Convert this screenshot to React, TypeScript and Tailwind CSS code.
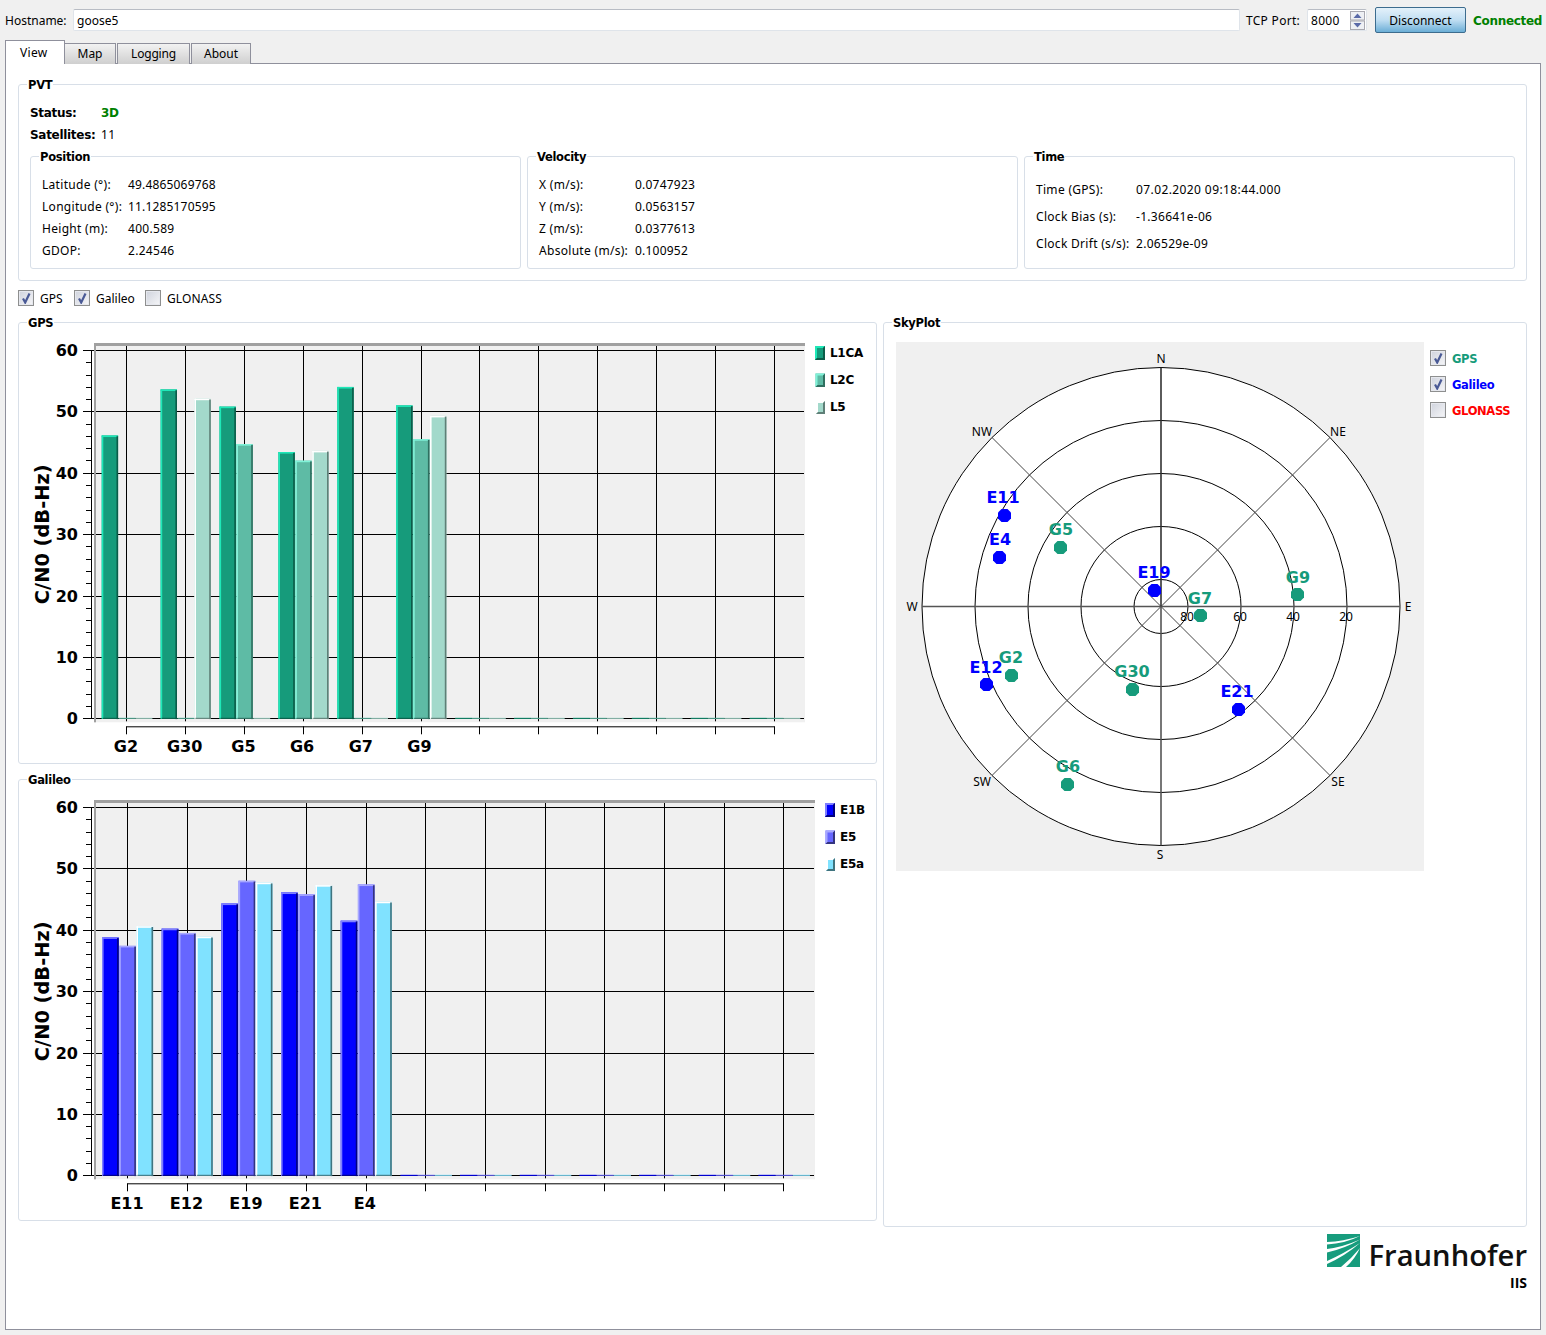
import React from "react";

const sans = "font-['Noto_Sans',sans-serif]";
const bold = "font-['DejaVu_Sans',sans-serif] font-bold";

function GroupBox({ title, className = "", children }: { title: string; className?: string; children?: React.ReactNode }) {
  return (
    <div className={`relative border border-[#d8dfe8] rounded-[3px] bg-white ${className}`}>
      <span className={`absolute -top-[8px] left-[8px] bg-white px-[1px] text-[11.5px] tracking-[-0.3px] leading-[16px] text-black ${bold}`}>{title}</span>
      {children}
    </div>
  );
}

function Check({ checked }: { checked?: boolean }) {
  return (
    <span className="w-[16px] h-[16px] shrink-0 border border-[#8e8f8f] shadow-[inset_0_0_0_1px_#e6e8ee] bg-gradient-to-br from-[#cfd3dd] to-[#f6f6f8] flex items-center justify-center">
      {checked && (
        <svg width="12" height="12" viewBox="0 0 12 12">
          <path d="M3 6.5 L5.2 10.5 L9.5 1.5" fill="none" stroke="#4a5a96" strokeWidth="2.2" />
        </svg>
      )}
    </span>
  );
}

type Series = { main: string; light: string; dark: string; name: string };

function BarChart({
  top, plotRight, step, gridStart, barStart, barW, groupStep, labels, values, series, title, legendX,
}: {
  top: number; plotRight: number; step: number; gridStart: number; barStart: number; barW: number; groupStep: number;
  labels: string[]; values: number[][]; series: Series[]; title: string; legendX: number;
}) {
  const y60 = top + 7;
  const y0 = y60 + 368.3;
  const unit = 368.3 / 60;
  const plotH = y0 + 4 - top;
  const grid = Array.from({ length: 12 }, (_, i) => Math.round(gridStart + i * step) + 0.5);
  const ticks: React.ReactNode[] = [];
  for (let i = 0; i <= 6; i++) {
    const y = Math.round(y0 - i * 10 * unit) + 0.5;
    ticks.push(<line key={`M${i}`} x1={83} x2={plotRight} y1={y} y2={y} stroke="#000" />);
    ticks.push(
      <text key={`T${i}`} x={78} y={y + 5} textAnchor="end" fontFamily="DejaVu Sans" fontWeight="700" fontSize="16" fill="#000">
        {i * 10}
      </text>
    );
    if (i < 6) for (let j = 1; j < 5; j++) {
      const my = Math.round(y0 - (i * 10 + j * 2) * unit) + 0.5;
      ticks.push(<line key={`m${i}${j}`} x1={86} x2={92} y1={my} y2={my} stroke="#000" />);
    }
  }
  return (
    <svg className="block" width="857" height="440" viewBox={`19 ${top - 20} 857 440`}>
      <rect x={94} y={top} width={plotRight - 94 + 1} height={plotH} fill="#f0f0f0" />
      {grid.map((x) => (
        <line key={x} x1={x} x2={x} y1={top + 3} y2={y0 + 3} stroke="#000" />
      ))}
      {ticks}
      <rect x={94} y={top} width={plotRight - 94 + 1} height={3} fill="#a0a0a0" />
      <rect x={94} y={top} width={2} height={plotH} fill="#a0a0a0" />
      <line x1={91.5} x2={91.5} y1={y60} y2={y0} stroke="#000" />
      {Array.from({ length: 12 }, (_, g) =>
        series.map((s, k) => {
          const v = values[g]?.[k] ?? 0;
          const x = barStart + g * groupStep + k * barW;
          if (v === 0) return <rect key={`${g}${k}`} x={x} y={y0 - 0.5} width={barW} height={1} fill={s.main} />;
          const y = y0 - v * unit - 0.5;
          return (
            <g key={`${g}${k}`}>
              <rect x={x} y={y} width={barW - 0.5} height={y0 - y + 0.5} fill={s.main} />
              <rect x={x} y={y} width={1.6} height={y0 - y + 0.5} fill={s.light} />
              <rect x={x} y={y} width={barW - 0.5} height={1.6} fill={s.light} />
              <rect x={x + barW - 2.1} y={y + 0.8} width={1.6} height={y0 - y} fill={s.dark} />
              <rect x={x + 1} y={y0 - 0.5} width={barW - 1.5} height={1} fill={s.dark} />
            </g>
          );
        })
      )}
      <line x1={grid[0]} x2={grid[11]} y1={y0 + 8.5} y2={y0 + 8.5} stroke="#000" />
      {grid.map((x) => (
        <line key={`b${x}`} x1={x} x2={x} y1={y0 + 8} y2={y0 + 16} stroke="#000" />
      ))}
      {labels.map((l, i) => (
        <text key={l} x={gridStart + i * (step - 0.2)} y={y0 + 34} textAnchor="middle" fontFamily="DejaVu Sans" fontWeight="700" fontSize="16" fill="#000">
          {l}
        </text>
      ))}
      <text transform={`translate(49 ${y0 - 184}) rotate(-90)`} textAnchor="middle" fontFamily="DejaVu Sans" fontWeight="700" fontSize="19.4" fill="#000">
        {title}
      </text>
      {series.map((s, i) => {
        const ly = top + 3 + i * 27;
        const inset = i * 0.5;
        const w = 10 - inset;
        const h = 14 - inset;
        return (
          <g key={s.name}>
            <rect x={legendX + inset} y={ly + inset} width={w} height={h} fill={s.main} />
            <path d={`M${legendX + inset} ${ly + inset} h${w} l-2 2 h-${w - 4} v${h - 4} l-2 2z`} fill={s.light} />
            <path d={`M${legendX + 10} ${ly + inset} v${h} h-${w} l2 -2 h${w - 4} v-${h - 4}z`} fill={s.dark} />
            <text x={legendX + 15} y={ly + 10.5} fontFamily="DejaVu Sans" fontWeight="700" fontSize="12" letterSpacing="-0.3" fill="#000">
              {s.name}
            </text>
          </g>
        );
      })}
    </svg>
  );
}

const gpsSeries: Series[] = [
  { name: "L1CA", main: "#169b7b", light: "#1ee8b8", dark: "#0b5c49" },
  { name: "L2C", main: "#5ebba5", light: "#80f2d8", dark: "#2f6f60" },
  { name: "L5", main: "#a3d9cb", light: "#ffffff", dark: "#5f7f77" },
];
const galSeries: Series[] = [
  { name: "E1B", main: "#0000ff", light: "#7f7fff", dark: "#00007f" },
  { name: "E5", main: "#6666ff", light: "#a8a8ff", dark: "#33337f" },
  { name: "E5a", main: "#80e2ff", light: "#ffffff", dark: "#40747f" },
];

const sats: { n: string; x: number; y: number; lx: number; ly: number; gal?: boolean }[] = [
  { n: "E11", x: 1004.5, y: 515.5, lx: 1003, ly: 497, gal: true },
  { n: "E4", x: 999.5, y: 557.5, lx: 1000, ly: 539, gal: true },
  { n: "G5", x: 1060.5, y: 547.5, lx: 1061, ly: 529 },
  { n: "E19", x: 1154.5, y: 590.5, lx: 1154, ly: 572, gal: true },
  { n: "G7", x: 1200.5, y: 615.5, lx: 1200, ly: 598 },
  { n: "G9", x: 1297.5, y: 594.5, lx: 1298, ly: 577 },
  { n: "E12", x: 986.5, y: 684.5, lx: 986, ly: 667, gal: true },
  { n: "G2", x: 1011.5, y: 675.5, lx: 1011, ly: 657 },
  { n: "G30", x: 1132.5, y: 689.5, lx: 1132, ly: 671 },
  { n: "E21", x: 1238.5, y: 709.5, lx: 1237, ly: 691, gal: true },
  { n: "G6", x: 1067.5, y: 784.5, lx: 1068, ly: 766 },
];

function SkyPlot() {
  const cx = 1161, cy = 606.5, R = 239;
  const d = R * Math.SQRT1_2;
  const small = (x: number, y: number, t: string) => (
    <text key={t} x={x} y={y + 5} textAnchor="middle" fontFamily="Noto Sans" fontSize="12" fill="#000">{t}</text>
  );
  return (
    <svg className="block" width="528" height="529" viewBox="896 342 528 529">
      <rect x={896} y={342} width={528} height={529} fill="#f0f0f0" />
      <circle cx={cx} cy={cy} r={R} fill="#fff" stroke="#000" />
      {[186, 133, 80, 27].map((r) => (
        <circle key={r} cx={cx} cy={cy} r={r} fill="none" stroke="#000" />
      ))}
      <line x1={cx - d} y1={cy - d} x2={cx + d} y2={cy + d} stroke="#444" />
      <line x1={cx - d} y1={cy + d} x2={cx + d} y2={cy - d} stroke="#444" />
      <line x1={cx - R} y1={cy} x2={cx + R} y2={cy} stroke="#555" strokeWidth="1.6" />
      <line x1={cx} y1={cy - R} x2={cx} y2={cy} stroke="#333" strokeWidth="1.6" />
      <line x1={cx} y1={cy} x2={cx} y2={cy + R} stroke="#555" strokeWidth="1.6" />
      {small(1161, 358, "N")}{small(1160, 854, "S")}{small(912, 606, "W")}{small(1408, 606, "E")}
      {small(982, 431, "NW")}{small(1338, 431, "NE")}{small(982, 781, "SW")}{small(1338, 781, "SE")}
      {small(1187, 616, "80")}{small(1240, 616, "60")}{small(1293, 616, "40")}{small(1346, 616, "20")}
      {sats.map((s) => {
        const c = s.gal ? "#0000ff" : "#169b7b";
        return (
          <g key={s.n}>
            <polygon
              points={`${s.x - 3},${s.y - 6.5} ${s.x + 3},${s.y - 6.5} ${s.x + 6.5},${s.y - 3} ${s.x + 6.5},${s.y + 3} ${s.x + 3},${s.y + 6.5} ${s.x - 3},${s.y + 6.5} ${s.x - 6.5},${s.y + 3} ${s.x - 6.5},${s.y - 3}`}
              fill={c}
            />
            <text x={s.lx} y={s.ly + 6} textAnchor="middle" fontFamily="DejaVu Sans" fontWeight="700" fontSize="16" fill={c}>{s.n}</text>
          </g>
        );
      })}
    </svg>
  );
}

function Logo() {
  return (
    <svg width="33" height="33" viewBox="0 0 33 33" className="block shrink-0">
      <rect width="33" height="33" fill="#179c7d" />
      <path d="M0 8 Q16 7.5 33 2 Q18 9.5 0 10.5Z" fill="#fff" />
      <path d="M0 15 Q16 13 33 5.5 Q18 14.5 0 18.5Z" fill="#fff" />
      <path d="M0 27 Q16 20 33 9 Q18 22 0 30Z" fill="#fff" />
      <path d="M14 33 Q24 25 33 14 Q28 25 19 33Z" fill="#fff" />
    </svg>
  );
}

const KV = ({ k, v, w, h, vc = "tracking-[0.3px]" }: { k: string; v: string; w: string; h: string; vc?: string }) => (
  <div className={`flex items-center ${h}`}>
    <span className={`${w} tracking-[0.3px]`}>{k}</span>
    <span className={vc}>{v}</span>
  </div>
);

export default function App() {
  return (
    <div className={`w-[1546px] h-[1335px] bg-[#f0f0f0] overflow-hidden text-[12px] leading-[16px] text-black ${sans}`}>
      <div className="h-[41px] flex items-center pl-[5px] pr-[4px] pb-[1px]">
        <span className="w-[68px] shrink-0 pt-[2px]">Hostname:</span>
        <div className="flex-1 min-w-0 h-[22px] bg-white border border-[#dfe4ea] border-t-[#b8bcc4] rounded-[2px] pl-[3px] flex items-center pt-[2px]">goose5</div>
        <span className="ml-[6px] w-[61px] shrink-0 pt-[2px] tracking-[0.3px]">TCP Port:</span>
        <div className="w-[60px] shrink-0 h-[22px] bg-white border border-[#dfe4ea] border-t-[#b8bcc4] rounded-[2px] pl-[3px] pr-[1px] flex items-center justify-between">
          <span className="pt-[2px] tracking-[0.3px]">8000</span>
          <svg width="15" height="19" viewBox="0 0 15 19">
            <rect x="0.5" y="0.5" width="14" height="8.5" fill="#eef0f4" stroke="#a8a8b0" />
            <rect x="0.5" y="10" width="14" height="8.5" fill="#eef0f4" stroke="#a8a8b0" />
            <path d="M3.5 7 L7.5 2.5 L11.5 7Z" fill="#5a6aa8" />
            <path d="M3.5 12 L7.5 16.5 L11.5 12Z" fill="#5a6aa8" />
          </svg>
        </div>
        <div className="ml-[8px] w-[91px] shrink-0 h-[26px] border border-[#3c6c8e] rounded-[2px] bg-gradient-to-b from-[#e4f1fa] via-[#c0def2] to-[#6aaed6] flex items-center justify-center pt-[2px]">Disconnect</div>
        <span className={`ml-[7px] w-[69px] shrink-0 whitespace-nowrap pt-[2px] text-[#008000] tracking-[-0.3px] ${bold}`}>Connected</span>
      </div>

      <div className="h-[23px] flex items-end pl-[5px] relative z-10">
        <div className="w-[60px] h-[24px] bg-white border border-[#8f909c] border-b-0 pl-[14px] pt-[4px] tracking-[0.3px]">View</div>
        <div className="w-[51px] h-[21px] bg-gradient-to-b from-[#f2f2f2] to-[#cfcfcf] border border-[#8f909c] border-l-0 border-b-0 text-center pt-[2px]">Map</div>
        <div className="ml-[1px] w-[73px] h-[21px] bg-gradient-to-b from-[#f2f2f2] to-[#cfcfcf] border border-[#8f909c] border-b-0 text-center pt-[2px] tracking-[-0.2px]">Logging</div>
        <div className="ml-[1px] w-[60px] h-[21px] bg-gradient-to-b from-[#f2f2f2] to-[#cfcfcf] border border-[#8f909c] border-b-0 text-center pt-[2px]">About</div>
      </div>

      <div className="ml-[5px] w-[1536px] h-[1267px] -mt-[1px] bg-white border border-[#8f909c] pl-[12px] pt-[20px]">
        <GroupBox title="PVT" className="w-[1509px] h-[197px] pl-[11px] pt-[20px]">
          <div className="flex items-center h-[16px]">
            <span className={`w-[71px] tracking-[-0.3px] ${bold}`}>Status:</span>
            <span className={`text-[#008000] tracking-[-0.3px] ${bold}`}>3D</span>
          </div>
          <div className="flex items-center h-[16px] mt-[6px]">
            <span className={`w-[71px] tracking-[-0.3px] ${bold}`}>Satellites:</span>
            <span className="tracking-[0.3px]">11</span>
          </div>
          <div className="flex gap-[6px] mt-[13px]">
            <GroupBox title="Position" className="w-[491px] h-[113px] pl-[11px] pt-[17px]">
              <KV k="Latitude (°):" v="49.4865069768" w="w-[86px]" h="h-[22px]" vc="tracking-[0.17px]" />
              <KV k="Longitude (°):" v="11.1285170595" w="w-[86px]" h="h-[22px]" vc="tracking-[0.17px]" />
              <KV k="Height (m):" v="400.589" w="w-[86px]" h="h-[22px]" />
              <KV k="GDOP:" v="2.24546" w="w-[86px]" h="h-[22px]" />
            </GroupBox>
            <GroupBox title="Velocity" className="w-[491px] h-[113px] pl-[11px] pt-[17px]">
              <KV k="X (m/s):" v="0.0747923" w="w-[96px]" h="h-[22px]" vc="tracking-[0.22px]" />
              <KV k="Y (m/s):" v="0.0563157" w="w-[96px]" h="h-[22px]" vc="tracking-[0.22px]" />
              <KV k="Z (m/s):" v="0.0377613" w="w-[96px]" h="h-[22px]" vc="tracking-[0.22px]" />
              <KV k="Absolute (m/s):" v="0.100952" w="w-[96px]" h="h-[22px]" vc="tracking-[0.22px]" />
            </GroupBox>
            <GroupBox title="Time" className="w-[491px] h-[113px] pl-[11px] pt-[19px]">
              <KV k="Time (GPS):" v="07.02.2020 09:18:44.000" w="w-[100px]" h="h-[27px]" vc="tracking-[0.4px]" />
              <KV k="Clock Bias (s):" v="-1.36641e-06" w="w-[100px]" h="h-[27px]" />
              <KV k="Clock Drift (s/s):" v="2.06529e-09" w="w-[100px]" h="h-[27px]" />
            </GroupBox>
          </div>
        </GroupBox>

        <div className="flex items-center h-[16px] mt-[9px]">
          <Check checked /><span className="ml-[6px] w-[34px] pt-[2px]">GPS</span>
          <Check checked /><span className="ml-[6px] w-[49px] pt-[2px]">Galileo</span>
          <Check /><span className="ml-[6px] pt-[2px] tracking-[0.1px]">GLONASS</span>
        </div>

        <div className="flex gap-[6px] mt-[16px]">
          <div className="flex flex-col gap-[15px]">
            <GroupBox title="GPS" className="w-[859px] h-[442px]">
              <BarChart
                top={342} plotRight={804} step={58.9} gridStart={126} barStart={101.7} barW={16.9} groupStep={58.9}
                labels={["G2", "G30", "G5", "G6", "G7", "G9"]}
                values={[[46, 0, 0], [53.5, 0, 52], [50.7, 44.6, 0], [43.3, 41.9, 43.5], [53.9, 0, 0], [50.9, 45.4, 49.2]]}
                series={gpsSeries} title="C/N0 (dB-Hz)" legendX={815}
              />
            </GroupBox>
            <GroupBox title="Galileo" className="w-[859px] h-[442px]">
              <BarChart
                top={799} plotRight={814} step={59.67} gridStart={127} barStart={102} barW={17.2} groupStep={59.67}
                labels={["E11", "E12", "E19", "E21", "E4"]}
                values={[[38.7, 37.3, 40.5], [40.1, 39.4, 38.8], [44.2, 47.9, 47.6], [46, 45.7, 47.2], [41.4, 47.3, 44.5]]}
                series={galSeries} title="C/N0 (dB-Hz)" legendX={825}
              />
            </GroupBox>
          </div>
          <GroupBox title="SkyPlot" className="w-[644px] h-[905px] pl-[12px] pt-[19px]">
            <div className="flex">
              <SkyPlot />
              <div className={`ml-[6px] pt-[8px] flex flex-col gap-[10px] ${bold} text-[11.5px] tracking-[-0.35px]`}>
                <div className="flex items-center h-[16px]"><Check checked /><span className="ml-[6px] pt-[2px] text-[#169b7b]">GPS</span></div>
                <div className="flex items-center h-[16px]"><Check checked /><span className="ml-[6px] pt-[2px] text-[#0000ff]">Galileo</span></div>
                <div className="flex items-center h-[16px]"><Check /><span className="ml-[6px] pt-[2px] text-[#ff0000]">GLONASS</span></div>
              </div>
            </div>
          </GroupBox>
        </div>

        <div className="w-[1509px] mt-[7px] flex flex-col items-end">
          <div className="flex items-start h-[40px]">
            <Logo />
            <span className="ml-[9px] pt-[2px] text-[29.2px] leading-[38px] font-semibold font-['Open_Sans',sans-serif] text-[#111]">Fraunhofer</span>
          </div>
          <span className="text-[14px] leading-[18px] font-bold font-['Open_Sans',sans-serif]">IIS</span>
        </div>
      </div>
    </div>
  );
}
